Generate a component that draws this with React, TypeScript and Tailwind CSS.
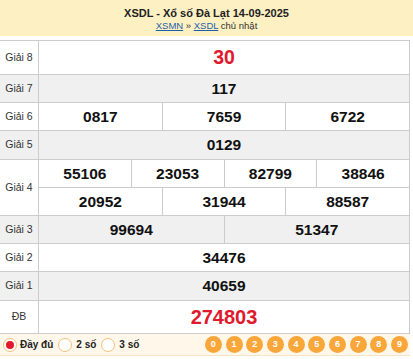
import React from "react";

const Lbl = ({ children }: { children: React.ReactNode }) => (
  <div className="w-[39px] shrink-0 border-r border-[#cccccc] flex items-center justify-center text-[10.5px] text-[#333]">
    {children}
  </div>
);

const Num = ({ v, first }: { v: string; first?: boolean }) => (
  <div
    className={
      "flex-1 basis-0 flex items-center justify-center text-[15.5px] font-bold text-[#111] " +
      (first ? "" : "border-l border-[#cccccc]")
    }
  >
    {v}
  </div>
);

function Row({
  label,
  nums,
  gray,
  h,
}: {
  label: string;
  nums: string[];
  gray?: boolean;
  h: string;
}) {
  return (
    <div className={"flex border-b border-[#cccccc] " + h + " " + (gray ? "bg-[#f0f0f0]" : "bg-white")}>
      <Lbl>{label}</Lbl>
      <div className="flex flex-1">
        {nums.map((n, i) => (
          <Num key={i} v={n} first={i === 0} />
        ))}
      </div>
    </div>
  );
}

export default function App() {
  const balls = ["0", "1", "2", "3", "4", "5", "6", "7", "8", "9"];
  return (
    <div className="w-[413px] h-[359px] bg-white font-['Liberation_Sans',Arial,sans-serif] overflow-hidden">
      <div className="h-[36px] bg-[#fdf1c4] flex flex-col items-center pt-[7px]">
        <div className="text-[11px] font-bold leading-[13px] text-[#222]">XSDL - Xổ số Đà Lạt 14-09-2025</div>
        <div className="text-[9.5px] leading-[12px] text-[#333]">
          <span className="text-[#1d5ea8] underline">XSMN</span> » <span className="text-[#1d5ea8] underline">XSDL</span> chủ nhật
        </div>
      </div>
      <div className="h-[4px]" />
      <div className="w-[410px] border-t border-r border-[#cccccc]">
        <div className="flex border-b border-[#cccccc] h-[34px] bg-white">
          <Lbl>Giải 8</Lbl>
          <div className="flex-1 flex items-center justify-center text-[19.5px] font-bold text-[#e0192d]">30</div>
        </div>
        <Row label="Giải 7" nums={["117"]} gray h="h-[28px]" />
        <Row label="Giải 6" nums={["0817", "7659", "6722"]} h="h-[28px]" />
        <Row label="Giải 5" nums={["0129"]} gray h="h-[29px]" />
        <div className="flex border-b border-[#cccccc] h-[56px] bg-white">
          <Lbl>Giải 4</Lbl>
          <div className="flex flex-col flex-1">
            <div className="flex h-[28px] border-b border-[#cccccc]">
              <Num v="55106" first />
              <Num v="23053" />
              <Num v="82799" />
              <Num v="38846" />
            </div>
            <div className="flex flex-1">
              <Num v="20952" first />
              <Num v="31944" />
              <Num v="88587" />
            </div>
          </div>
        </div>
        <Row label="Giải 3" nums={["99694", "51347"]} gray h="h-[28px]" />
        <Row label="Giải 2" nums={["34476"]} h="h-[28px]" />
        <Row label="Giải 1" nums={["40659"]} gray h="h-[29px]" />
        <div className="flex border-b border-[#cccccc] h-[33px] bg-white">
          <Lbl>ĐB</Lbl>
          <div className="flex-1 flex items-center justify-center text-[20px] font-bold text-[#e0192d]">274803</div>
        </div>
      </div>
      <div className="w-[410px] h-[22px] bg-[#fff8ea] border-b border-[#f6e4c6] flex items-center">
        <div className="flex items-center pl-[3px]">
          <div className="w-[14px] h-[14px] rounded-full border border-[#f1c27c] bg-white flex items-center justify-center">
            <div className="w-[8px] h-[8px] rounded-full bg-[#e0192d]" />
          </div>
          <span className="ml-[3px] text-[10px] font-bold text-[#222]">Đầy đủ</span>
          <div className="ml-[5px] w-[14px] h-[14px] rounded-full border border-[#f1c27c] bg-white" />
          <span className="ml-[4px] text-[10px] font-bold text-[#222]">2 số</span>
          <div className="ml-[5px] w-[14px] h-[14px] rounded-full border border-[#f1c27c] bg-white" />
          <span className="ml-[4px] text-[10px] font-bold text-[#222]">3 số</span>
        </div>
        <div className="ml-auto mr-[2px] flex gap-[3.7px]">
          {balls.map((b) => (
            <div
              key={b}
              className="w-[17px] h-[17px] rounded-full bg-[#f9a63a] flex items-center justify-center text-[9px] font-bold text-white"
            >
              {b}
            </div>
          ))}
        </div>
      </div>
    </div>
  );
}
